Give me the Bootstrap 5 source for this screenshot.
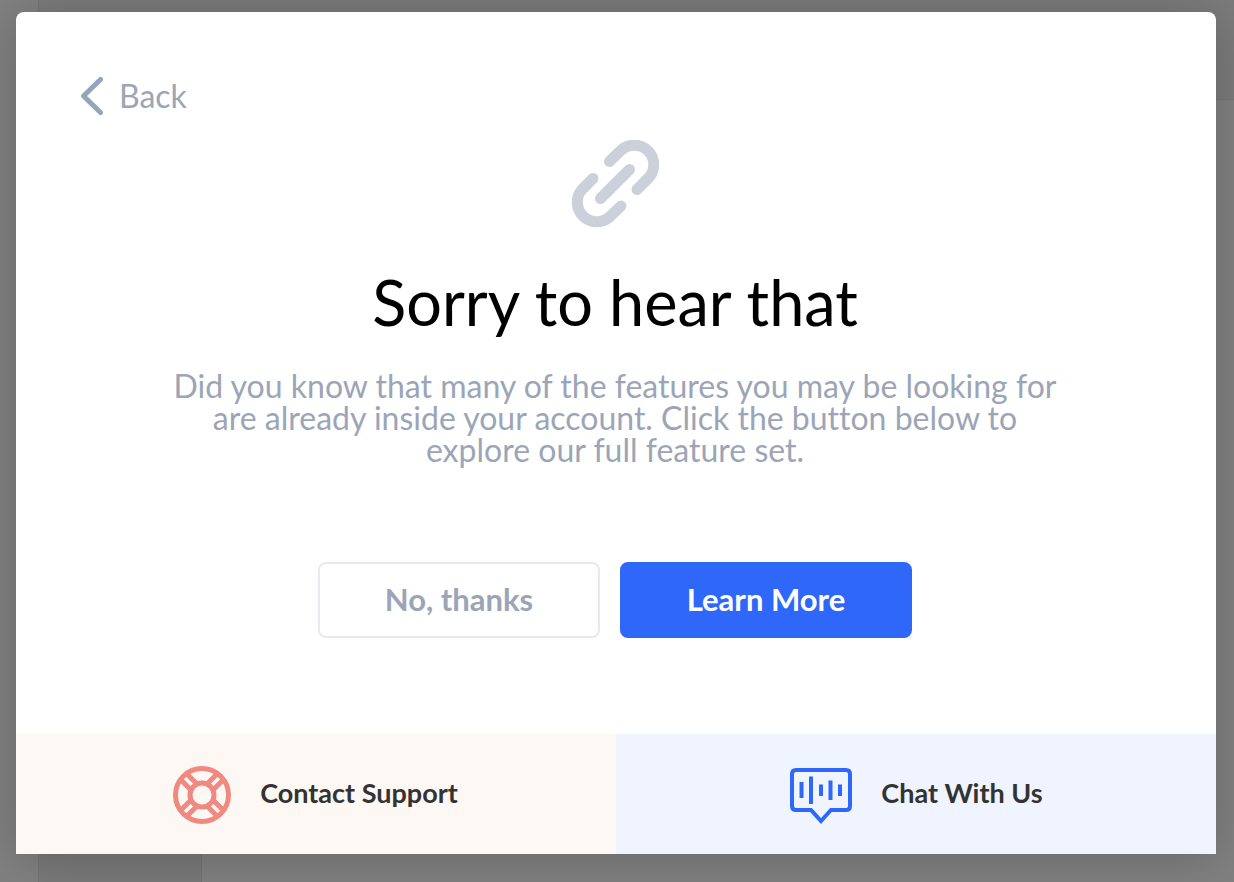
<!DOCTYPE html>
<html lang="en">
<head>
<meta charset="utf-8">
<meta name="viewport" content="width=device-width, initial-scale=1">
<title>Sorry to hear that</title>
<link href="https://cdn.jsdelivr.net/npm/bootstrap@5.3.0/dist/css/bootstrap.min.css" rel="stylesheet">
<style>
  body { font-family: Lato, "Liberation Sans", sans-serif; font-variant-ligatures: none; background: #808080; }
  .backdrop-rail { width: 38px; }
  .backdrop-nav { width: 164px; background: #797979; border-left: 1px solid #747474; border-right: 1px solid #747474; }
  .backdrop-head { height: 100px; background: #7b7b7b; border-bottom: 1px solid #757575; border-left: 1px solid #747474; }
  .overlay { padding: 12px 18px 28px 16px; }
  .dialog { border-radius: 8px 8px 0 0; box-shadow: 0 4px 48px rgba(0, 0, 0, .2); }
  .dialog-main { padding: 64px 66px 96px 64px; }
  .back-link { color: #9ba5b7; font-size: 32px; line-height: 38px; gap: 15px; }
  .link-mark { margin-top: 24px; }
  .headline { font-size: 63px; line-height: 72px; color: #000; margin: 38px 0 32px; }
  .message { font-size: 32px; line-height: 32px; color: #9ba5b7; max-width: 896px; margin-bottom: 96px; }
  .choice { font-size: 31px; font-weight: 700; line-height: 36px; padding: 17px 0 19px; border-width: 2px; border-radius: 8px; }
  .choice-no { width: 282px; color: #9ba5b7; border-color: #e6eaee; background: #fff; }
  .choice-yes { width: 292px; color: #fff; background: #2f68f9; border-color: #2f68f9; }
  .choices { gap: 20px; }
  .foot-link { height: 120px; font-size: 27px; font-weight: 700; color: #333; gap: 28px; padding-bottom: 2px; }
  .foot-link svg { margin-top: 4px; }
  .foot-support { background: #fef8f5; padding-right: 2px; }
  .foot-chat { background: #eff4ff; }
</style>
</head>
<body>
<div class="position-relative min-vh-100 d-flex">
  <div class="backdrop-rail"></div>
  <div class="flex-grow-1 d-flex flex-column">
    <div class="backdrop-head"></div>
    <div class="backdrop-nav flex-grow-1"></div>
  </div>

  <div class="overlay position-absolute top-0 start-0 w-100 h-100">
    <main class="dialog bg-white h-100 d-flex flex-column overflow-hidden" role="dialog" aria-labelledby="headline">
      <div class="dialog-main flex-grow-1 d-flex flex-column align-items-center text-center">
        <a href="#" class="back-link align-self-start d-flex align-items-center text-decoration-none">
          <svg width="24" height="40" viewBox="0 0 24 40" fill="none" stroke="#91a5bc" stroke-width="5" stroke-linecap="round" stroke-linejoin="round" aria-hidden="true"><path d="M20.500 3.500 3.500 20 20.500 36.500"/></svg>
          Back
        </a>
        <svg class="link-mark flex-shrink-0" width="88" height="88" viewBox="0 0 88 88" fill="none" stroke="#cbd0db" stroke-width="11" stroke-linecap="round" aria-hidden="true">
          <path d="M29.500 58.500 58.500 29.500M38.500 21.500 49.500 10.800A19.500 19.500 0 0 1 77 38.500L66 49.500M22 38.500 11 49.500A19.500 19.500 0 0 0 38.500 77L50 66"/>
        </svg>
        <h1 class="headline fw-normal" id="headline">Sorry to hear that</h1>
        <p class="message">Did you know that many of the features you may be looking for are already inside your account. Click the button below to explore our full feature set.</p>
        <div class="choices d-flex justify-content-center">
          <button type="button" class="btn choice choice-no">No, thanks</button>
          <button type="button" class="btn choice choice-yes">Learn More</button>
        </div>
      </div>
      <div class="row g-0">
        <div class="col-6">
          <a href="#" class="foot-link foot-support d-flex align-items-center justify-content-center text-decoration-none">
            <svg width="60" height="60" viewBox="0 0 60 60" fill="none" stroke="#f08a80" stroke-width="5" aria-hidden="true">
              <circle cx="30" cy="30" r="26.500"/><circle cx="30" cy="30" r="12"/>
              <g id="strap"><path d="M19 25 9 15M25 19 15 9"/></g>
              <use href="#strap" transform="rotate(90 30 30)"/><use href="#strap" transform="rotate(180 30 30)"/><use href="#strap" transform="rotate(270 30 30)"/>
            </svg>
            Contact Support
          </a>
        </div>
        <div class="col-6">
          <a href="#" class="foot-link foot-chat d-flex align-items-center justify-content-center text-decoration-none">
            <svg width="64" height="60" viewBox="0 0 64 60" fill="none" stroke="#2f68f9" stroke-width="4" aria-hidden="true">
              <path d="M7 5H57Q61 5 61 9V41Q61 45 57 45H42L32 56 22 45H7Q3 45 3 41V9Q3 5 7 5ZM12.500 17V33M22 11.500V39M32 19.500V31M41.500 15.500V35M51 19.500V31"/>
            </svg>
            Chat With Us
          </a>
        </div>
      </div>
    </main>
  </div>
</div>
<script src="https://cdn.jsdelivr.net/npm/bootstrap@5.3.0/dist/js/bootstrap.bundle.min.js"></script>
</body>
</html>
